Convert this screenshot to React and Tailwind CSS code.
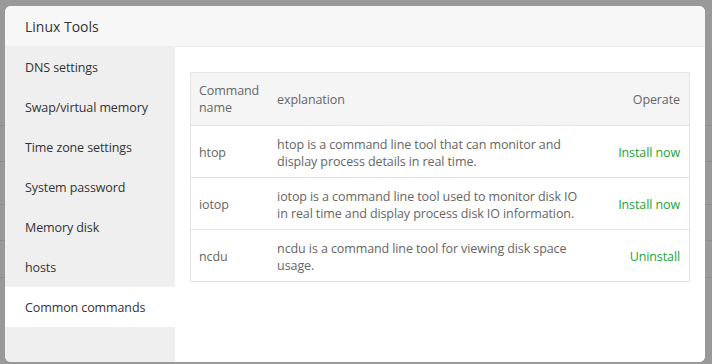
import React from "react";

const menu = [
  "DNS settings",
  "Swap/virtual memory",
  "Time zone settings",
  "System password",
  "Memory disk",
  "hosts",
  "Common commands",
];

const rows = [
  {
    name: "htop",
    desc: "htop is a command line tool that can monitor and display process details in real time.",
    op: "Install now",
  },
  {
    name: "iotop",
    desc: "iotop is a command line tool used to monitor disk IO in real time and display process disk IO information.",
    op: "Install now",
  },
  {
    name: "ncdu",
    desc: "ncdu is a command line tool for viewing disk space usage.",
    op: "Uninstall",
  },
];

export default function App() {
  return (
    <div
      className="relative w-[712px] h-[364px] overflow-hidden bg-[#999999]"
      style={{ fontFamily: '"Open Sans", "Noto Sans", sans-serif' }}
    >
      {/* background page rows behind the overlay */}
      <div className="flex flex-col pt-[125px]">
        <div className="h-[36px] border-t border-[#8c8c8c]" />
        <div className="h-[43px] border-t border-[#8c8c8c]" />
        <div className="h-[36px] border-t border-[#8c8c8c]" />
        <div className="h-[37px] border-t border-[#8c8c8c]" />
        <div className="h-[40px] border-t border-[#8c8c8c]" />
      </div>

      {/* modal */}
      <div className="absolute left-[5px] top-[6px] w-[700px] h-[356px] rounded-[6px] overflow-hidden bg-white flex flex-col">
        <div className="h-[41px] shrink-0 bg-[#f7f7f7] border-b border-[#eeeeee] flex items-center pl-[20px] text-[14px] text-[#333333]">
          Linux Tools
        </div>
        <div className="flex flex-1 min-h-0">
          <div className="w-[170px] shrink-0 bg-[#efefef] flex flex-col">
            {menu.map((m, i) => (
              <div
                key={m}
                className={
                  "h-[40px] flex items-center pl-[20px] pt-[2px] text-[12.5px] tracking-[-0.1px] text-[#333333] " +
                  (i === menu.length - 1 ? "bg-white" : "")
                }
              >
                {m}
              </div>
            ))}
          </div>
          <div className="flex-1 bg-white pt-[25px] px-[15px]">
            <table className="w-full border-collapse border border-[#e5e5e5] text-[12.5px] tracking-[-0.1px] leading-[17px] text-[#666666]">
              <thead>
                <tr className="bg-[#f5f5f5] h-[53px]">
                  <th className="font-normal text-left pl-[8px] pr-[9px] w-[77px] border-b border-[#e5e5e5]">
                    Command name
                  </th>
                  <th className="font-normal text-left px-[9px] border-b border-[#e5e5e5]">
                    explanation
                  </th>
                  <th className="font-normal text-right px-[9px] whitespace-nowrap border-b border-[#e5e5e5]">
                    Operate
                  </th>
                </tr>
              </thead>
              <tbody>
                {rows.map((r) => (
                  <tr key={r.name} className="h-[52px] border-b border-[#e5e5e5]">
                    <td className="pl-[8px] pr-[9px] pt-[2px]">{r.name}</td>
                    <td className="pl-[9px] pr-[20px] pt-[2px]">{r.desc}</td>
                    <td className="px-[9px] pt-[2px] text-right whitespace-nowrap text-[#20a53a]">
                      {r.op}
                    </td>
                  </tr>
                ))}
              </tbody>
            </table>
          </div>
        </div>
      </div>
    </div>
  );
}
